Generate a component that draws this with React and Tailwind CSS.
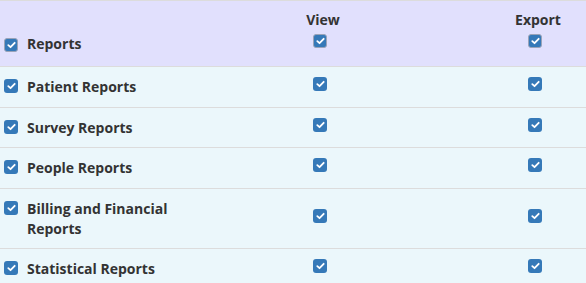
import React from "react";

const rows = [
  "Patient Reports",
  "Survey Reports",
  "People Reports",
  "Billing and Financial Reports",
  "Statistical Reports",
];

const Check = ({ header = false }) => (
  <span
    className={
      header
        ? "flex w-[14px] h-[14px] items-center justify-center rounded-[3px] bg-[#3579b8] border border-[#9aa3b8]"
        : "flex w-[14px] h-[14px] items-center justify-center rounded-[3px] bg-[#3579b8]"
    }
  >
    <svg width="9" height="8" viewBox="0 0 9 8">
      <path
        d="M1.3 4.2 L3.5 6.2 L7.7 1.8"
        fill="none"
        stroke="white"
        strokeWidth="1.8"
        strokeLinecap="round"
        strokeLinejoin="round"
      />
    </svg>
  </span>
);

const App = () => {
  return (
    <div className="w-[586px] h-[283px] overflow-hidden bg-[#ebf7fb] text-[#333] font-['Open_Sans',sans-serif] text-[14px] leading-[20px] font-bold">
      {/* Header */}
      <div className="flex h-[67px] bg-[#e1e0fd] border-t border-b border-[#dcdcdc]">
        <div className="w-[204px] flex items-end gap-[9px] pl-[4px] pb-[12px]">
          <div className="shrink-0 mb-[2px]">
            <Check header />
          </div>
          <span>Reports</span>
        </div>
        <div className="w-[232px] flex flex-col items-center pt-[9px]">
          <span className="pl-[6px]">View</span>
          <div className="mt-[4px]">
            <Check header />
          </div>
        </div>
        <div className="w-[102px] ml-[48px] flex flex-col items-center pt-[9px]">
          <span className="pl-[6px]">Export</span>
          <div className="mt-[4px]">
            <Check header />
          </div>
        </div>
      </div>

      {/* Rows */}
      {rows.map((label) => (
        <div key={label} className="flex border-b border-[#dcdcdc]">
          <div className="w-[204px] flex items-start gap-[9px] pl-[4px] pr-[6px] pt-[10px] pb-[9.5px]">
            <div className="shrink-0 mt-[2px]">
              <Check />
            </div>
            <span>{label}</span>
          </div>
          <div className="w-[232px] flex items-center justify-center pb-[5px]">
            <Check />
          </div>
          <div className="w-[102px] ml-[48px] flex items-center justify-center pb-[5px]">
            <Check />
          </div>
        </div>
      ))}
    </div>
  );
};

export default App;
